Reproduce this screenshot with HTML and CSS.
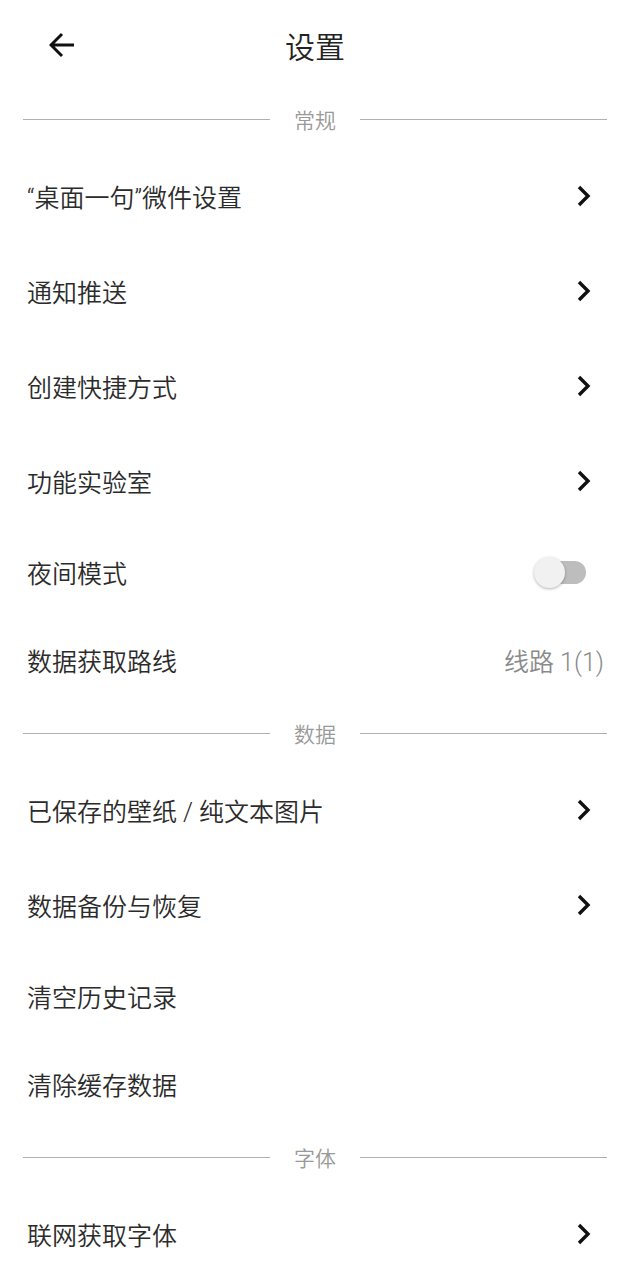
FILE: index.html
```html
<!DOCTYPE html>
<html>
<head>
  <title>设置</title>
  <link rel="stylesheet" href="styles.css">
</head>
<body>
  <div class="topbar">
    <div class="back">
      <svg width="26" height="26" viewBox="0 0 26 26">
        <path d="M25 13 H3 M13 2 L2 13 L13 24" fill="none" stroke="#111" stroke-width="3"/>
      </svg>
    </div>
    <h1>设置</h1>
    <div></div>
  </div>

  <div class="section"><span>常规</span></div>

  <div class="row">
    <span>“桌面一句”微件设置</span>
    <svg class="chevron" width="14" height="22" viewBox="0 0 14 22"><path d="M2 2 L11 11 L2 20" fill="none" stroke="#111" stroke-width="3.4"/></svg>
  </div>
  <div class="row">
    <span>通知推送</span>
    <svg class="chevron" width="14" height="22" viewBox="0 0 14 22"><path d="M2 2 L11 11 L2 20" fill="none" stroke="#111" stroke-width="3.4"/></svg>
  </div>
  <div class="row">
    <span>创建快捷方式</span>
    <svg class="chevron" width="14" height="22" viewBox="0 0 14 22"><path d="M2 2 L11 11 L2 20" fill="none" stroke="#111" stroke-width="3.4"/></svg>
  </div>
  <div class="row">
    <span>功能实验室</span>
    <svg class="chevron" width="14" height="22" viewBox="0 0 14 22"><path d="M2 2 L11 11 L2 20" fill="none" stroke="#111" stroke-width="3.4"/></svg>
  </div>
  <div class="row compact">
    <span>夜间模式</span>
    <div class="switch"><div class="thumb"></div></div>
  </div>
  <div class="row compact">
    <span>数据获取路线</span>
    <span class="value">线路 1(1)</span>
  </div>

  <div class="section"><span>数据</span></div>

  <div class="row">
    <span>已保存的壁纸 / 纯文本图片</span>
    <svg class="chevron" width="14" height="22" viewBox="0 0 14 22"><path d="M2 2 L11 11 L2 20" fill="none" stroke="#111" stroke-width="3.4"/></svg>
  </div>
  <div class="row">
    <span>数据备份与恢复</span>
    <svg class="chevron" width="14" height="22" viewBox="0 0 14 22"><path d="M2 2 L11 11 L2 20" fill="none" stroke="#111" stroke-width="3.4"/></svg>
  </div>
  <div class="row compact">
    <span>清空历史记录</span>
  </div>
  <div class="row compact">
    <span>清除缓存数据</span>
  </div>

  <div class="section"><span>字体</span></div>

  <div class="row">
    <span>联网获取字体</span>
    <svg class="chevron" width="14" height="22" viewBox="0 0 14 22"><path d="M2 2 L11 11 L2 20" fill="none" stroke="#111" stroke-width="3.4"/></svg>
  </div>
</body>
</html>
```

FILE: styles.css
```css
body {
  margin: 0;
  font-family: Roboto, "Noto Sans CJK SC", sans-serif;
  background-color: #ffffff;
  color: #2b2b2b;
  overflow: hidden;
}

.topbar {
  height: 90px;
  display: grid;
  grid-template-columns: 1fr auto 1fr;
  align-items: center;
}

.back {
  padding-left: 49px;
  display: flex;
  align-items: center;
}

.topbar h1 {
  margin: 0;
  font-size: 30px;
  font-weight: 350;
  color: #222222;
}

.section {
  height: 58px;
  display: flex;
  align-items: center;
  padding: 0 23px;
  gap: 24px;
  font-size: 21px;
  font-weight: 350;
  color: #999999;
}

.section::before,
.section::after {
  content: "";
  flex: 1;
  height: 1px;
  background-color: #b0b0b0;
}

.row {
  height: 95px;
  display: flex;
  align-items: center;
  justify-content: space-between;
  padding: 0 26px 0 27px;
  font-size: 25px;
  font-weight: 350;
}

.row.compact {
  height: 88px;
}

.chevron {
  margin-right: 13px;
}

.value {
  color: #8a8a8a;
}

.switch {
  position: relative;
  width: 38px;
  height: 23px;
  margin-right: 18px;
  border-radius: 12px;
  background-color: #bdbdbd;
}

.thumb {
  position: absolute;
  left: -14px;
  top: -4px;
  width: 31px;
  height: 31px;
  border-radius: 50%;
  background-color: #f1f1f1;
  box-shadow: 0 1px 3px rgba(0, 0, 0, 0.3);
}
```
